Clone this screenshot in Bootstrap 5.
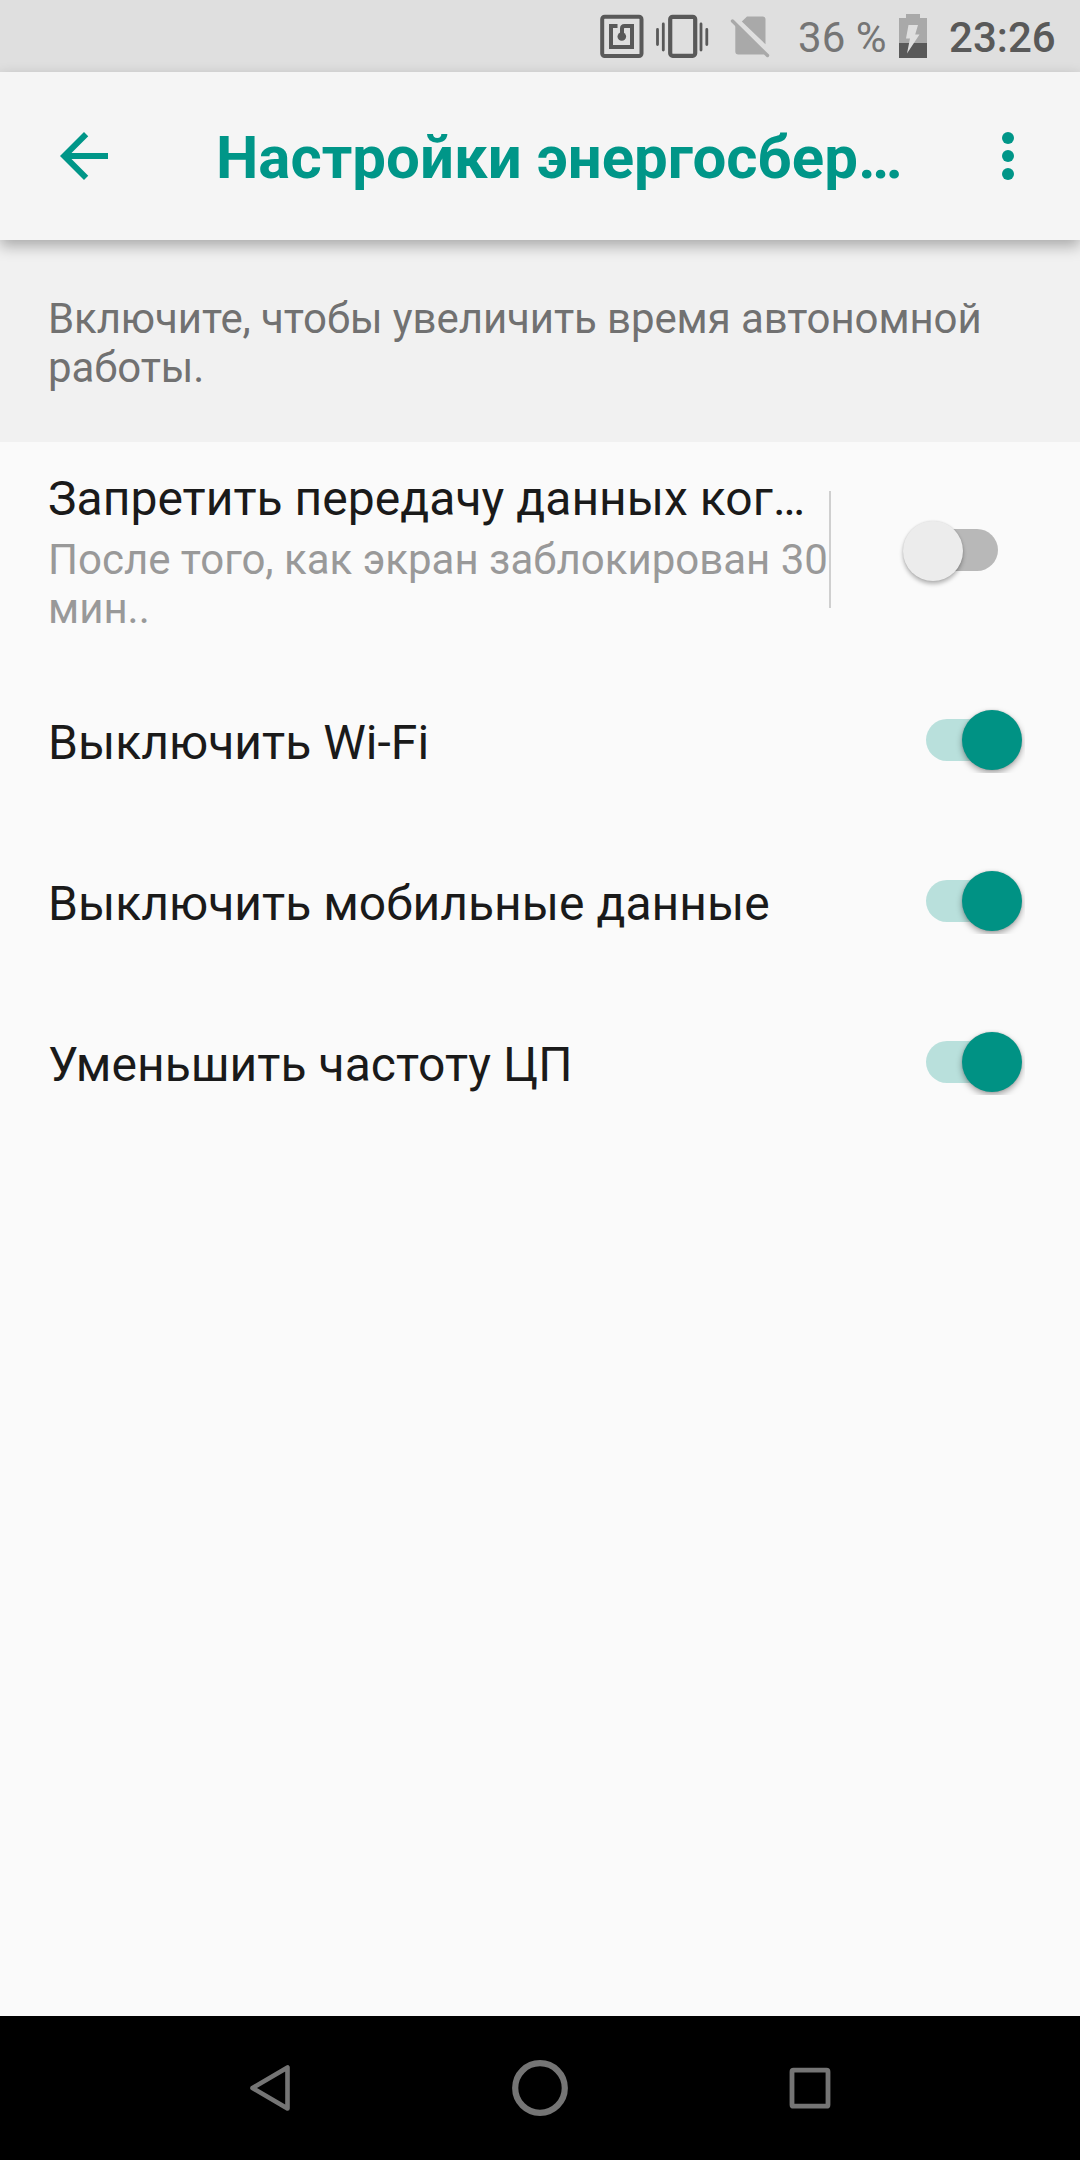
<!DOCTYPE html>
<html lang="ru">
<head>
<meta charset="utf-8">
<meta name="viewport" content="width=device-width, initial-scale=1">
<title>Настройки энергосбережения</title>
<link href="https://cdn.jsdelivr.net/npm/bootstrap@5.3.0/dist/css/bootstrap.min.css" rel="stylesheet">
<style>
  body { font-family: Roboto, "Noto Sans", sans-serif; background: #fafafa; color: #1a1a1a; font-size: 48px; line-height: 56px; letter-spacing: .03px; }
  svg { display: block; flex: none; }
  .screen { width: 1080px; height: 2160px; }
  .statusbar { height: 72px; background: #dfdfdf; padding-right: 23px; font-size: 42px; line-height: 50px; }
  .statusbar .percent { color: #757575; margin: 3px 0 0 26px; width: 88px; }
  .statusbar .battery { margin-left: 13px; }
  .statusbar .clock { color: #595959; font-weight: 500; margin: 3px 0 0 22px; width: 108px; }
  .appbar { height: 168px; background: #f5f5f5; padding: 0 36px 0 48px; box-shadow: 0 6px 14px rgba(0,0,0,.3); z-index: 1; }
  .appbar h1 { font-size: 60px; line-height: 70px; font-weight: 700; color: #009688; margin: 4px 0 0 96px; letter-spacing: 0; }
  .hint { height: 202px; background: #f1f1f1; padding: 54px 48px 0; font-size: 42px; line-height: 49px; color: #717171; letter-spacing: -.1px; }
  .setting { height: 161px; padding: 0 55.5px 0 48px; }
  .setting-tall { height: 220px; padding-right: 0; }
  .setting-tall .texts { width: 781px; padding-top: 29px; }
  .setting-tall .note { font-size: 42px; line-height: 49px; color: #999; margin-top: 8px; letter-spacing: 0; }
  .rule { width: 1.5px; height: 117px; background: #cfcfcf; margin-top: 49px; }
  .toggle { position: relative; width: 102px; height: 66px; overflow: hidden; margin-bottom: 5px; }
  .toggle .track { position: absolute; left: 3px; top: 12px; width: 84px; height: 42px; border-radius: 21px; background: #b9e0dc; }
  .toggle .thumb { position: absolute; left: 39px; top: 3px; width: 60px; height: 60px; border-radius: 50%; background: #009284; box-shadow: 0 3px 6px rgba(0,0,0,.35), 0 0 2px rgba(0,0,0,.15); }
  .toggle.off { overflow: visible; margin: 75px 0 0 69.5px; }
  .toggle.off .track { left: 14px; background: #b8b8b8; }
  .toggle.off .thumb { left: 2.5px; top: 4px; background: #ececec; box-shadow: 0 3px 4px rgba(0,0,0,.28), 0 0 2px rgba(0,0,0,.12); }
  .navkeys { height: 144px; background: #000; }
</style>
</head>
<body>
<div class="screen d-flex flex-column overflow-hidden">
  <div class="statusbar d-flex align-items-center justify-content-end">
    <svg width="44" height="44" viewBox="0 0 44 44" fill="none" stroke="#595959"><rect x="2.2" y="2.7" width="39.3" height="39.3" rx="2.5" stroke-width="4"/><path d="M17.5 12H11V33H32V12H24.5Q22 12 22 14.5V21" stroke-width="4"/><circle cx="21.8" cy="22.5" r="4.3" fill="#595959" stroke="none"/></svg>
    <svg class="ms-2" width="62" height="44" viewBox="0 0 62 44" fill="none" stroke="#595959"><rect x="18.2" y="2.8" width="25" height="39" rx="2.5" stroke-width="4.2"/><path d="M5.5 15.5V30.5M11.3 10V36M49 10V36M54.8 15.5V30.5" stroke-width="2.8" stroke-linecap="round"/></svg>
    <svg class="ms-3" width="42" height="44" viewBox="1 0 42 44"><path d="M12.8 7.5L18 2.5H33.5Q36.5 2.5 36.5 5.5V30.3ZM6.3 11.5L35.5 40Q34.5 40.5 33.5 40.5H9.3Q6.3 40.5 6.3 37.5Z" fill="#a9a9a9"/><path d="M3.5 7L38.5 41.5" stroke="#a9a9a9" stroke-width="3.4" stroke-linecap="round"/></svg>
    <span class="percent text-nowrap">36 %</span>
    <svg class="battery" width="28" height="44" viewBox="0 0 28 44"><path d="M0 4H7V0H21V4H28V29H0Z" fill="#a9a9a9"/><path d="M0 29H28V44H0Z" fill="#595959"/><path d="M9.5 11H19L16.2 20.5H20.5L8 39.5L11 24.5H7Z" fill="#dfdfdf"/></svg>
    <span class="clock text-nowrap">23:26</span>
  </div>

  <header class="appbar d-flex align-items-center position-relative">
    <svg width="72" height="72" viewBox="0 0 24 24" fill="#009688"><path d="M20 11H7.83l5.59-5.59L12 4l-8 8 8 8 1.41-1.41L7.83 13H20v-2z"/></svg>
    <h1 class="text-nowrap">Настройки энергосбер…</h1>
    <svg class="ms-auto" width="72" height="72" viewBox="0 0 24 24" fill="#009688"><circle cx="12" cy="6" r="2"/><circle cx="12" cy="12" r="2"/><circle cx="12" cy="18" r="2"/></svg>
  </header>

  <p class="hint mb-0">Включите, чтобы увеличить время автономной работы.</p>

  <main class="flex-grow-1">
    <div class="setting setting-tall d-flex align-items-start">
      <div class="texts">
        <div class="text-nowrap">Запретить передачу данных ког…</div>
        <div class="note">После того, как экран заблокирован 30<br>мин..</div>
      </div>
      <div class="rule"></div>
      <div class="toggle off"><span class="track"></span><span class="thumb"></span></div>
    </div>
    <div class="setting d-flex align-items-center justify-content-between"><span>Выключить Wi-Fi</span><div class="toggle"><span class="track"></span><span class="thumb"></span></div></div>
    <div class="setting d-flex align-items-center justify-content-between"><span>Выключить мобильные данные</span><div class="toggle"><span class="track"></span><span class="thumb"></span></div></div>
    <div class="setting d-flex align-items-center justify-content-between"><span>Уменьшить частоту ЦП</span><div class="toggle"><span class="track"></span><span class="thumb"></span></div></div>
  </main>

  <nav class="navkeys d-flex align-items-center justify-content-center">
    <svg width="270" height="144" viewBox="0 0 270 144" fill="none" stroke="#757575"><path d="M152.5 51.5V92.5L117.5 72Z" stroke-width="4.6" stroke-linejoin="round"/></svg>
    <svg width="270" height="144" viewBox="0 0 270 144" fill="none" stroke="#757575"><circle cx="135" cy="72" r="24.8" stroke-width="6.2"/></svg>
    <svg width="270" height="144" viewBox="0 0 270 144" fill="none" stroke="#757575"><rect x="117" y="54.2" width="36" height="36" rx="1.5" stroke-width="4.8"/></svg>
  </nav>
</div>
<script src="https://cdn.jsdelivr.net/npm/bootstrap@5.3.0/dist/js/bootstrap.bundle.min.js"></script>
</body>
</html>
